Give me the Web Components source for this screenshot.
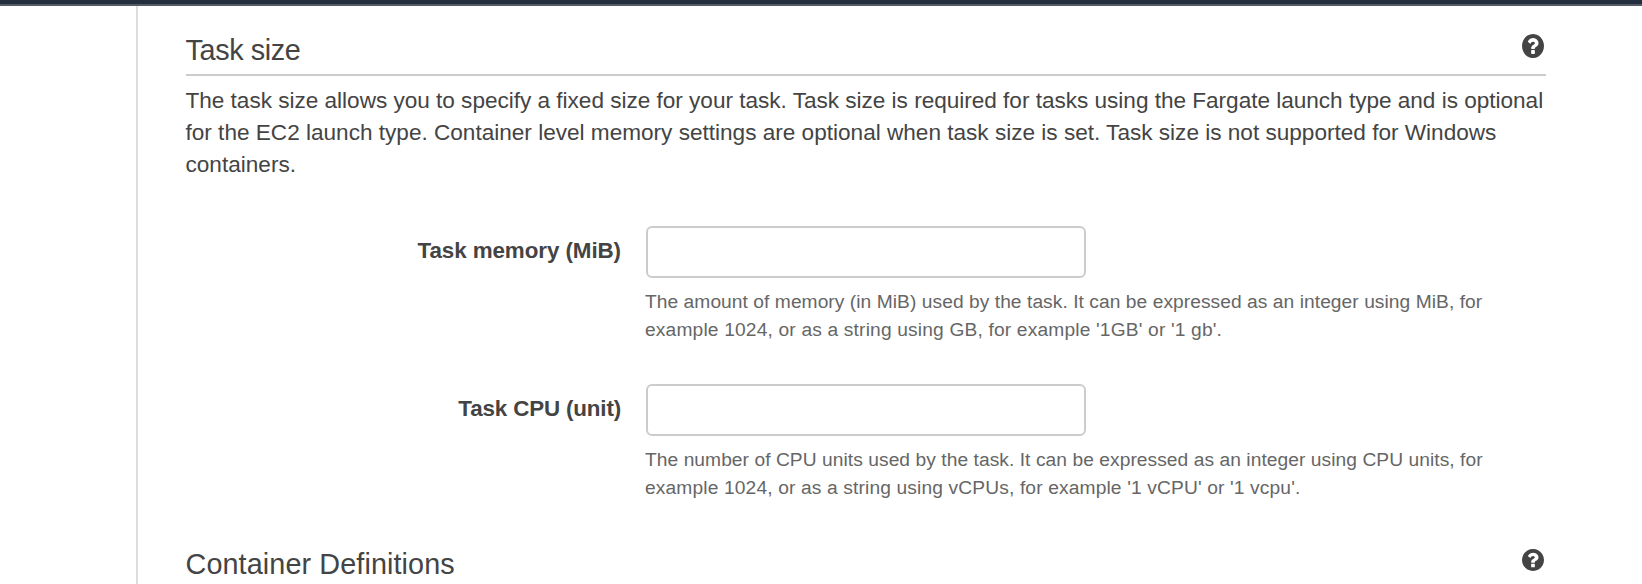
<!DOCTYPE html>
<html lang="en">
<head>
<meta charset="utf-8">
<title>Task definition</title>
<style>
html, body { height: 100%; margin: 0; overflow: hidden; background: #fff; }
body { font-family: "Liberation Sans", Arial, sans-serif; color: #444; }
</style>
</head>
<body>
<console-page>
  <section-heading>Task size</section-heading>
  <section-intro>
    <text-line>The task size allows you to specify a fixed size for your task. Task size is required for tasks using the Fargate launch type and is optional</text-line>
    <text-line style="--track:-.008px">for the EC2 launch type. Container level memory settings are optional when task size is set. Task size is not supported for Windows</text-line>
    <text-line style="--track:0">containers.</text-line>
  </section-intro>
  <form-field label="Task memory (MiB)" style="--label-track:-.08px">
    <text-line style="--track:.056px">The amount of memory (in MiB) used by the task. It can be expressed as an integer using MiB, for</text-line>
    <text-line style="--track:.165px">example 1024, or as a string using GB, for example '1GB' or '1 gb'.</text-line>
  </form-field>
  <form-field label="Task CPU (unit)" style="--label-track:-.16px; --gap:33px">
    <text-line style="--track:.06px">The number of CPU units used by the task. It can be expressed as an integer using CPU units, for</text-line>
    <text-line style="--track:.14px">example 1024, or as a string using vCPUs, for example '1 vCPU' or '1 vcpu'.</text-line>
  </form-field>
  <section-heading style="--heading-track:.095px; --icon-height:22px; --icon-top:14px; --icon-right:2.5px">Container Definitions</section-heading>
</console-page>
<script>
const define = (name, html, setup) => customElements.define(name, class extends HTMLElement {
  constructor() {
    super();
    this.attachShadow({ mode: 'open' }).innerHTML = html;
  }
  connectedCallback() { if (setup) setup(this, this.shadowRoot); }
});

define('console-page', `
<style>
:host { display: flex; flex-direction: column; height: 100vh; overflow: hidden; }
header { flex: none; height: 4px; background: #232f3e; border-bottom: 2px solid #545b64; }
main { flex: 1; min-height: 0; box-sizing: border-box; margin-left: 136px; border-left: 2px solid #ddd; padding: 15px 96px 0 48px; overflow: hidden; }
</style>
<header></header><main><slot></slot></main>`);

define('help-icon', `
<style>
:host { display: block; }
svg { display: block; width: 22px; height: var(--icon-height, 24px); fill: #444; }
</style>
<svg viewBox="128 128 1536 1536" preserveAspectRatio="none" aria-hidden="true"><path d="M1024 1376v-192q0-14-9-23t-23-9h-192q-14 0-23 9t-9 23v192q0 14 9 23t23 9h192q14 0 23-9t9-23zm256-672q0-88-55.5-163t-138.5-116-170-41q-243 0-371 213-15 24 8 42l132 100q7 6 19 6 16 0 25-12 53-68 86-92 34-24 86-24 48 0 85.5 26t37.5 59q0 38-20 61t-68 45q-63 28-115.5 86.5t-52.5 125.5v36q0 14 9 23t23 9h192q14 0 23-9t9-23q0-19 21.5-49.5t54.5-49.5q32-18 49-28.5t46-35 44.5-48 28-60.5 12.5-81zm384 192q0 209-103 385.5t-279.5 279.5-385.5 103-385.5-103-279.5-279.5-103-385.5 103-385.5 279.5-279.5 385.5-103 385.5 103 279.5 279.5 103 385.5z"/></svg>`);

define('section-heading', `
<style>
:host { display: flex; justify-content: space-between; align-items: flex-start; box-sizing: border-box; height: 55px; border-bottom: 2px solid #ccc; }
h2 { margin: 13px 0 0 -.5px; font-size: 28.8px; font-weight: 400; line-height: 33px; letter-spacing: var(--heading-track, -.38px); white-space: nowrap; }
help-icon { margin-top: var(--icon-top, 13px); margin-right: var(--icon-right, 2px); }
</style>
<h2><slot></slot></h2><help-icon></help-icon>`);

define('text-line', `
<style>
:host { display: block; white-space: nowrap; letter-spacing: var(--track, -.023px); }
</style>
<slot></slot>`);

define('section-intro', `
<style>
:host { display: block; padding-top: 9px; margin: 0 0 45px -.5px; font-size: 22.6px; line-height: 32px; }
</style>
<slot></slot>`);

define('form-field', `
<style>
:host { display: grid; grid-template-columns: 435px 1fr; column-gap: 25px; margin-bottom: var(--gap, 40px); }
label { margin-top: 9px; text-align: right; font-weight: 700; font-size: 22.4px; line-height: 32px; letter-spacing: var(--label-track, 0); white-space: nowrap; }
input { display: block; box-sizing: border-box; width: 440px; height: 52px; margin: 0; padding: 0 12px; border: 2px solid #ccc; border-radius: 6px; background: #fff; font: inherit; outline: 0; }
.hint { margin: 10px 0 0 -1px; font-size: 19.2px; line-height: 28px; color: #666; }
</style>
<label for="f"></label>
<div><input id="f" type="text"><div class="hint"><slot></slot></div></div>`,
(el, root) => { root.querySelector('label').textContent = el.getAttribute('label'); });
</script>
</body>
</html>
